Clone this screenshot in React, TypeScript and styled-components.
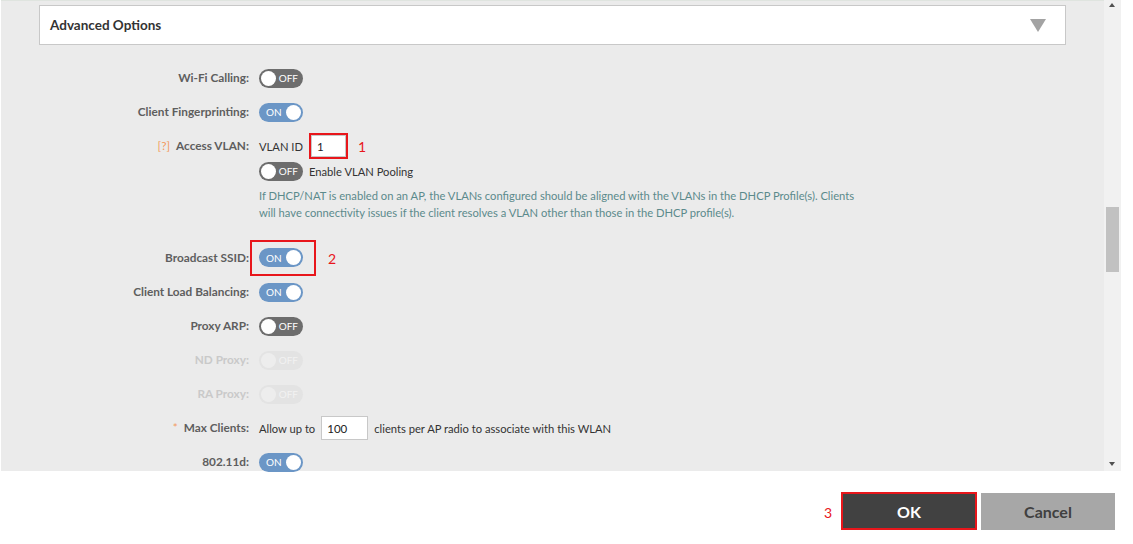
import React from 'react'
import styled, { createGlobalStyle } from 'styled-components'

const GlobalStyle = createGlobalStyle`
  body {
    margin: 0;
    background: #fff;
    font-family: Lato, "Liberation Sans", sans-serif;
  }
`

const Page = styled.div`
  width: 1133px;
  height: 544px;
  display: flex;
  flex-direction: column;
  overflow: hidden;
`

const ScrollArea = styled.div`
  height: 471px;
  display: flex;
  padding-left: 1px;
  padding-right: 12px;
`

const Content = styled.div`
  flex: 1;
  background: #ebebeb;
  border-top: 1px solid #dfe4df;
  padding: 4px 38px 0 38px;
`

const Scrollbar = styled.div`
  width: 17px;
  background: #f1f1f1;
  position: relative;
`

const ScrollArrow = styled.div<{ $down?: boolean }>`
  position: absolute;
  left: 5px;
  ${p => (p.$down ? 'bottom: 5px;' : 'top: 3px;')}
  width: 0;
  height: 0;
  border-left: 3.5px solid transparent;
  border-right: 3.5px solid transparent;
  ${p => (p.$down ? 'border-top: 4px solid #505050;' : 'border-bottom: 4px solid #505050;')}
`

const Thumb = styled.div`
  position: absolute;
  left: 2px;
  top: 207px;
  width: 13px;
  height: 65px;
  background: #c1c1c1;
`

const SectionHeader = styled.div`
  height: 38px;
  background: #fff;
  border: 1px solid #c8c8c8;
  display: flex;
  align-items: center;
  justify-content: space-between;
  padding: 0 19px 0 10px;
  font-size: 13.5px;
  font-weight: 700;
  color: #333;
`

const Caret = styled.div`
  width: 0;
  height: 0;
  border-left: 8px solid transparent;
  border-right: 8px solid transparent;
  border-top: 13px solid #a3a3a3;
`

const Form = styled.div`
  margin-top: 16px;
  display: flex;
  flex-direction: column;
`

const Row = styled.div<{ $tall?: boolean }>`
  display: grid;
  grid-template-columns: 210px 1fr;
  column-gap: 10px;
  align-items: ${p => (p.$tall ? 'start' : 'center')};
  min-height: 34px;
  margin-bottom: ${p => (p.$tall ? '20px' : '0')};
`

const Label = styled.div<{ $disabled?: boolean }>`
  text-align: right;
  font-size: 11.8px;
  font-weight: 700;
  color: ${p => (p.$disabled ? '#c9c9c9' : '#5e5e5e')};
  line-height: 34px;
  white-space: nowrap;
`

const Mark = styled.span`
  color: #f39a5f;
  font-weight: 400;
  margin-right: 6px;
`

const Controls = styled.div`
  display: flex;
  flex-direction: column;
`

const Line = styled.div<{ $h?: number; $gap?: number }>`
  display: flex;
  align-items: center;
  gap: ${p => (p.$gap ?? 8)}px;
  height: ${p => p.$h || 34}px;
  font-size: 11.2px;
  color: #333;
  white-space: nowrap;
`

const Help = styled.div`
  margin-top: 8px;
  font-size: 11.2px;
  line-height: 17px;
  color: #5b8a8b;
  white-space: nowrap;
`

const ToggleTrack = styled.div<{ $on: boolean; $disabled?: boolean }>`
  width: 44px;
  height: 19px;
  border-radius: 10px;
  box-sizing: border-box;
  padding: 0 2px;
  display: flex;
  align-items: center;
  flex-direction: ${p => (p.$on ? 'row' : 'row-reverse')};
  justify-content: space-between;
  background: ${p => (p.$disabled ? '#e3e3e3' : p.$on ? '#6b96c6' : '#6d6d6d')};
  font-size: 10px;
  color: ${p => (p.$disabled ? '#f2f2f2' : '#fff')};
  flex-shrink: 0;
`

const ToggleText = styled.span<{ $on: boolean }>`
  padding: ${p => (p.$on ? '0 0 0 5px' : '0 3px 0 0')};
`

const Knob = styled.div<{ $disabled?: boolean }>`
  width: 15px;
  height: 15px;
  border-radius: 50%;
  background: ${p => (p.$disabled ? '#ededed' : '#fff')};
`

const Marked = styled.div<{ $pad: string }>`
  border: 2px solid #e8161b;
  padding: ${p => p.$pad};
  display: flex;
  align-items: center;
`

const Callout = styled.span`
  color: #e8161b;
  font-size: 14px;
  margin-left: 4px;
`

const Input = styled.div<{ $w: number; $h?: number }>`
  width: ${p => p.$w}px;
  height: ${p => p.$h || 22}px;
  box-sizing: border-box;
  border: 1px solid #c8c8c8;
  background: #fff;
  font-size: 11.5px;
  color: #222;
  display: flex;
  align-items: center;
  padding-left: 5px;
`

const Footer = styled.div`
  flex: 1;
  display: flex;
  align-items: flex-start;
  justify-content: flex-end;
  padding: 21px 18px 0 0;
  gap: 4px;
`

const Step = styled.span`
  color: #e8161b;
  font-size: 14px;
  align-self: center;
  margin-right: 5px;
  margin-top: -12px;
`

const Button = styled.button<{ $primary?: boolean }>`
  width: ${p => (p.$primary ? 136 : 134)}px;
  height: ${p => (p.$primary ? 38 : 37)}px;
  margin-top: ${p => (p.$primary ? 0 : 1)}px;
  border: ${p => (p.$primary ? '2px solid #e8161b' : 'none')};
  background: ${p => (p.$primary ? '#414141' : '#a7a7a7')};
  color: ${p => (p.$primary ? '#fff' : '#404040')};
  font-family: Lato, "Liberation Sans", sans-serif;
  font-size: 16px;
  font-weight: 700;
  cursor: pointer;
`

function Toggle({ on, disabled }: { on: boolean; disabled?: boolean }) {
  return (
    <ToggleTrack $on={on} $disabled={disabled}>
      <ToggleText $on={on}>{on ? 'ON' : 'OFF'}</ToggleText>
      <Knob $disabled={disabled} />
    </ToggleTrack>
  )
}

function ToggleRow({ label, on, disabled }: { label: string; on: boolean; disabled?: boolean }) {
  return (
    <Row>
      <Label $disabled={disabled}>{label}</Label>
      <Line>
        <Toggle on={on} disabled={disabled} />
      </Line>
    </Row>
  )
}

export default function App() {
  return (
    <Page>
      <GlobalStyle />
      <ScrollArea>
        <Content>
          <SectionHeader>
            Advanced Options
            <Caret />
          </SectionHeader>
          <Form>
            <ToggleRow label="Wi-Fi Calling:" on={false} />
            <ToggleRow label="Client Fingerprinting:" on />
            <Row $tall>
              <Label>
                <Mark>[?]</Mark>Access VLAN:
              </Label>
              <Controls>
                <Line $gap={6}>
                  VLAN ID
                  <Marked $pad="0">
                    <Input $w={35}>1</Input>
                  </Marked>
                  <Callout>1</Callout>
                </Line>
                <Line $h={16} $gap={6}>
                  <Toggle on={false} />
                  Enable VLAN Pooling
                </Line>
                <Help>
                  If DHCP/NAT is enabled on an AP, the VLANs configured should be aligned with the VLANs in the DHCP Profile(s). Clients
                  <br />
                  will have connectivity issues if the client resolves a VLAN other than those in the DHCP profile(s).
                </Help>
              </Controls>
            </Row>
            <Row>
              <Label>Broadcast SSID:</Label>
              <Line>
                <Marked $pad="6px 11px 7px 7px" style={{ marginLeft: -9 }}>
                  <Toggle on />
                </Marked>
                <Callout>2</Callout>
              </Line>
            </Row>
            <ToggleRow label="Client Load Balancing:" on />
            <ToggleRow label="Proxy ARP:" on={false} />
            <ToggleRow label="ND Proxy:" on={false} disabled />
            <ToggleRow label="RA Proxy:" on={false} disabled />
            <Row>
              <Label>
                <Mark>*</Mark>Max Clients:
              </Label>
              <Line $gap={6}>
                Allow up to
                <Input $w={47} $h={24}>100</Input>
                clients per AP radio to associate with this WLAN
              </Line>
            </Row>
            <ToggleRow label="802.11d:" on />
          </Form>
        </Content>
        <Scrollbar>
          <ScrollArrow />
          <Thumb />
          <ScrollArrow $down />
        </Scrollbar>
      </ScrollArea>
      <Footer>
        <Step>3</Step>
        <Button $primary>OK</Button>
        <Button>Cancel</Button>
      </Footer>
    </Page>
  )
}
